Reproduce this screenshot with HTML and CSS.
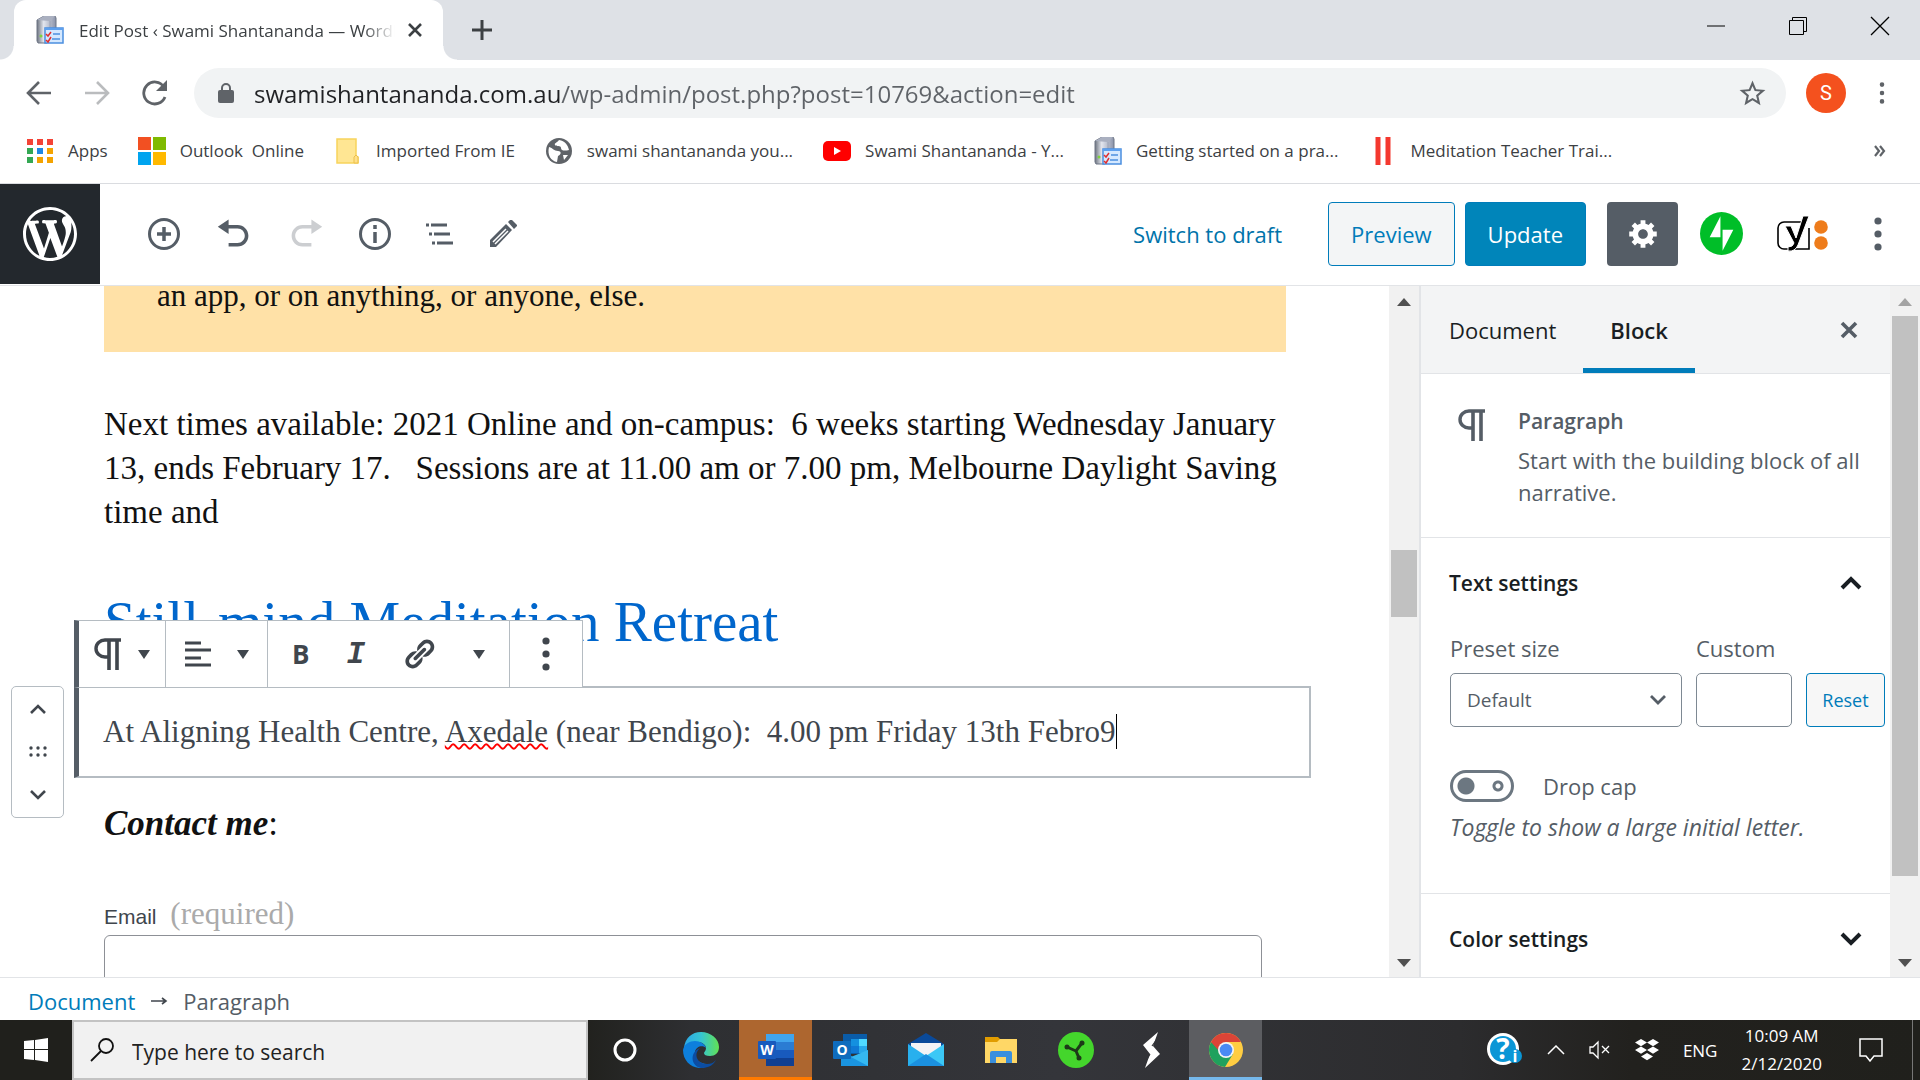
FILE: index.html
```html
<!DOCTYPE html>
<html lang="en">

<head>
    <meta charset="UTF-8">
    <meta name="viewport" content="width=device-width, initial-scale=1.0">
    <title>Edit Post ‹ Swami Shantananda — WordPress</title>
    <link rel="stylesheet" href="styles.css">
</head>

<body>
    <!-- shared icons -->
    <svg class="defs" aria-hidden="true">
        <defs>
            <linearGradient id="steel" x1="0" x2="1">
                <stop offset="0" stop-color="#6d7480" />
                <stop offset="0.35" stop-color="#e3e6ee" />
                <stop offset="1" stop-color="#8a92a8" />
            </linearGradient>
            <linearGradient id="edgeTop" x1="0" x2="1">
                <stop offset="0" stop-color="#2ba7e8" />
                <stop offset="0.5" stop-color="#36c5d0" />
                <stop offset="1" stop-color="#62e252" />
            </linearGradient>
        </defs>
        <symbol id="server" viewBox="0 0 28 28">
            <path d="M1 4L8 0h11l1 2v18l-9 7H2l-1-2z" fill="url(#steel)" stroke="#6c7484" />
            <path d="M1 4l7-4h11l-5 5z" fill="#aab0c0" />
            <path d="M14 5v20" stroke="#9aa2b4" />
            <circle cx="5" cy="20" r="1.5" fill="#7ed33c" />
            <path d="M9 12h18v15H9z" fill="#d4e8ff" stroke="#4b8fe0" stroke-width="1.5" />
            <path d="M9 12h18v2H9z" fill="#5ea0ee" />
            <path d="M17 18h7M16 23h8" stroke="#4b8fe0" stroke-width="1.5" />
            <path d="M10 18l2 2 3-4M10 24l2 2 3-5" fill="none" stroke="#e03030" stroke-width="1.5" />
        </symbol>
        <symbol id="pilcrow" viewBox="0 0 28 32">
            <path d="M27 2H11a9 8.5 0 0 0 0 17h4" fill="none" stroke="currentColor" stroke-width="3.4" />
            <path d="M15 2v30M23 2v30" stroke="currentColor" stroke-width="3.6" />
        </symbol>
        <symbol id="dots" viewBox="0 0 8 34">
            <circle cx="4" cy="4" r="3.6" />
            <circle cx="4" cy="17" r="3.6" />
            <circle cx="4" cy="30" r="3.6" />
        </symbol>
    </svg>

    <header class="browser">
        <div class="tab-strip">
            <div class="tab">
                <svg class="favicon"><use href="#server" /></svg>
                <span class="tab-title">Edit Post ‹ Swami Shantananda — WordPress</span>
                <button class="plain" aria-label="Close tab">
                    <svg width="16" height="16" viewBox="0 0 16 16"><path d="M2 2l12 12M14 2L2 14" stroke="#3c4043" stroke-width="2.6" /></svg>
                </button>
            </div>
            <button class="plain new-tab" aria-label="New tab">
                <svg width="22" height="22" viewBox="0 0 22 22"><path d="M11 1v20M1 11h20" stroke="#3c4043" stroke-width="3" /></svg>
            </button>
            <div class="window-buttons">
                <button class="plain" aria-label="Minimize"><svg width="20" height="20"><path d="M1 10h18" stroke="#000" /></svg></button>
                <button class="plain" aria-label="Restore"><svg width="20" height="20" fill="none" stroke="#000"><path d="M1.500 4.500h14v14h-14zM4.500 4.500v-3h14v14h-3" /></svg></button>
                <button class="plain" aria-label="Close"><svg width="20" height="20"><path d="M1 1l18 18M19 1L1 19" stroke="#000" stroke-width="1.300" /></svg></button>
            </div>
        </div>

        <div class="nav-bar">
            <button class="plain" aria-label="Back"><svg width="26" height="26" fill="none" stroke="#5f6368" stroke-width="2.600"><path d="M25 13H3M13 2L2 13l11 11" /></svg></button>
            <button class="plain" aria-label="Forward"><svg width="26" height="26" fill="none" stroke="#babcbe" stroke-width="2.600"><path d="M1 13h22M13 2l11 11-11 11" /></svg></button>
            <button class="plain" aria-label="Reload"><svg width="26" height="26"><path d="M22 7A11 11 0 1 0 23 17" fill="none" stroke="#5f6368" stroke-width="2.800" /><path d="M25 0v11H14z" fill="#5f6368" /></svg></button>
            <div class="omnibox">
                <svg width="16" height="20" viewBox="0 0 16 20"><rect x="0" y="7" width="16" height="13" rx="2" fill="#5f6368" /><path d="M4 8V5a4 4 0 0 1 8 0v3" fill="none" stroke="#5f6368" stroke-width="2" /></svg>
                <input class="url" type="text" aria-label="Address" value="swamishantananda.com.au/wp-admin/post.php?post=10769&amp;action=edit">
                <button class="plain" aria-label="Bookmark this page"><svg width="31" height="31" viewBox="0 0 24 24"><path fill="#5f6368" d="M22 9.240l-7.190-.620L12 2 9.190 8.630 2 9.240l5.460 4.730L5.820 21 12 17.270 18.180 21l-1.630-7.030L22 9.240zM12 15.400l-3.760 2.270 1-4.280-3.320-2.880 4.380-.380L12 6.100l1.710 4.040 4.380.380-3.320 2.880 1 4.280L12 15.400z" /></svg></button>
            </div>
            <button class="avatar">S</button>
            <button class="plain" aria-label="Menu"><svg width="8" height="22" fill="#5f6368" viewBox="0 0 8 34"><use href="#dots" /></svg></button>
        </div>

        <nav class="bookmarks">
            <a href="#">
                <svg viewBox="0 0 28 28">
                    <path d="M1 2h6v6H1zM11 2h6v6h-6zM21 2h6v6h-6z" fill="#f44336" />
                    <path d="M1 11h6v6H1zM1 20h6v6H1z" fill="#34a853" />
                    <path d="M11 11h6v6h-6z" fill="#1e88e5" />
                    <path d="M21 11h6v6h-6zM11 20h6v6h-6zM21 20h6v6h-6z" fill="#f4a300" />
                </svg>Apps</a>
            <a href="#">
                <svg viewBox="0 0 28 28">
                    <path d="M0 0h13v13H0z" fill="#f25022" />
                    <path d="M15 0h13v13H15z" fill="#7fba00" />
                    <path d="M0 15h13v13H0z" fill="#00a4ef" />
                    <path d="M15 15h13v13H15z" fill="#ffb900" />
                </svg>Outlook&nbsp; Online</a>
            <a href="#">
                <svg viewBox="0 0 28 28"><path d="M3 2h19v17l2 1v6H3z" fill="#ffe693" stroke="#f8d45c" stroke-width="1.500" /><path d="M20 26v-6l2-2 2 2v6z" fill="#ffe08a" stroke="#ecc04a" /></svg>Imported From IE</a>
            <a href="#">
                <svg viewBox="0 0 28 28"><circle cx="14" cy="14" r="13" fill="#5f6368" /><path d="M4 10c4 1 5 4 9 4s3 4 0 5l-1 6c-6-1-10-7-8-15zM14 3c-2 3-5 3-4 5s6 0 6 3 4 3 8 2c-1-5-4-9-10-10zM18 18l5 0-4 5z" fill="#fff" /></svg>swami shantananda you...</a>
            <a href="#">
                <svg viewBox="0 0 28 28"><rect y="4" width="28" height="20" rx="5" fill="#f00" /><path d="M11 10l7 4-7 4z" fill="#fff" /></svg>Swami Shantananda - Y...</a>
            <a href="#"><svg><use href="#server" /></svg>Getting started on a pra...</a>
            <a href="#"><svg viewBox="0 0 28 28"><path d="M10 0v28M20 0v28" stroke="#f4382f" stroke-width="5" /></svg>Meditation Teacher Trai...</a>
            <button class="plain more" aria-label="More bookmarks"><svg width="12" height="12" fill="none" stroke="#5f6368" stroke-width="2.200"><path d="M1 1l4 5-4 5M6 1l4 5-4 5" /></svg></button>
        </nav>
    </header>

    <div class="wp-header">
        <a class="wp-logo" href="#" aria-label="View Posts">
            <svg width="54" height="54" viewBox="0 0 20 20"><path fill="#fff" d="M20 10c0-5.510-4.490-10-10-10C4.480 0 0 4.490 0 10c0 5.520 4.480 10 10 10 5.510 0 10-4.480 10-10zM7.780 15.370L4.370 6.220c.55-.02 1.170-.08 1.170-.08.5-.06.44-1.130-.06-1.110 0 0-1.450.11-2.370.11-.18 0-.37 0-.58-.01C4.120 2.690 6.870 1.110 10 1.110c2.330 0 4.450.87 6.050 2.340-.68-.11-1.650.39-1.650 1.580 0 .74.45 1.360.9 2.100.35.61.55 1.360.55 2.460 0 1.490-1.400 5-1.400 5l-3.030-8.370c.54-.02.82-.17.82-.17.5-.05.44-1.250-.06-1.220 0 0-1.440.12-2.380.12-.87 0-2.330-.12-2.330-.12-.5-.03-.56 1.200-.06 1.220l.92.08 1.260 3.410zM17.410 10c.24-.64.74-1.870.43-4.250.7 1.290 1.050 2.710 1.050 4.250 0 3.290-1.730 6.240-4.400 7.780.97-2.590 1.940-5.200 2.920-7.780zM6.100 18.090C3.120 16.650 1.110 13.530 1.110 10c0-1.300.23-2.480.72-3.590C3.250 10.300 4.670 14.200 6.100 18.090zm4.030-6.630l2.580 6.980c-.86.29-1.760.45-2.710.45-.79 0-1.570-.11-2.290-.33.81-2.380 1.620-4.740 2.420-7.100z" /></svg>
        </a>
        <div class="wp-tools">
            <button class="plain" aria-label="Add block"><svg width="32" height="32" fill="none" stroke="currentColor" stroke-width="3"><circle cx="16" cy="16" r="14.500" /><path d="M16 9v14M9 16h14" stroke-width="3.500" /></svg></button>
            <button class="plain" aria-label="Undo"><svg width="38" height="36" viewBox="0 0 20 20"><path fill="currentColor" d="M12 5H7V2L1 6l6 4V7h5c2.200 0 4 1.800 4 4s-1.800 4-4 4H7v2h5c3.300 0 6-2.700 6-6s-2.700-6-6-6z" /></svg></button>
            <button class="plain" aria-label="Redo" disabled><svg width="36" height="36" viewBox="0 0 20 20"><path fill="#ccced1" d="M8 5h5V2l6 4-6 4V7H8c-2.200 0-4 1.800-4 4s1.800 4 4 4h5v2H8c-3.300 0-6-2.700-6-6s2.700-6 6-6z" /></svg></button>
            <button class="plain" aria-label="Content structure"><svg width="32" height="32" fill="none" stroke="currentColor" stroke-width="3"><circle cx="16" cy="16" r="14.500" /><path d="M16 14v11M16 7v4" stroke-width="3.500" /></svg></button>
            <button class="plain" aria-label="Block navigation"><svg width="28" height="28" stroke="currentColor" stroke-width="3"><path d="M0 5h3M5 5h16M3 14h3M8 14h16M6 23h3M11 23h16" /></svg></button>
            <button class="plain" aria-label="Modes"><svg width="28" height="28" viewBox="0 0 28 28"><path d="M1 27v-7L17 4l6 6L7 27z" fill="currentColor" /><path d="M19 2l2-2h2l5 5v1l-3 3z" fill="currentColor" /><path d="M4 22L17 9M6 24L19 11" stroke="#fff" stroke-width="1.500" /></svg></button>
        </div>
        <div class="wp-actions">
            <button class="plain draft">Switch to draft</button>
            <button class="button">Preview</button>
            <button class="button primary">Update</button>
            <button class="gear" aria-label="Settings"><svg width="34" height="34" viewBox="0 0 19 21"><path fill="#fff" fill-rule="evenodd" d="M18 12h-2.180c-.17.7-.44 1.350-.81 1.930l1.540 1.540-2.100 2.100-1.540-1.540c-.58.36-1.230.63-1.910.79V19H8v-2.180c-.68-.16-1.330-.43-1.910-.79l-1.540 1.540-2.120-2.120 1.540-1.540c-.36-.58-.63-1.230-.79-1.910H1V9.030h2.170c.16-.7.44-1.350.8-1.940L2.430 5.550l2.100-2.100 1.540 1.540c.58-.37 1.240-.64 1.930-.81V2h3v2.180c.68.16 1.330.43 1.910.79l1.540-1.540 2.120 2.120-1.540 1.540c.36.59.64 1.240.8 1.940H18V12zm-8.500 1.500c1.660 0 3-1.340 3-3s-1.340-3-3-3-3 1.340-3 3 1.340 3 3 3z" /></svg></button>
            <button class="plain jetpack" aria-label="Jetpack"><svg width="43" height="43" viewBox="0 0 32 32"><circle cx="16" cy="16" r="16" fill="#00be28" /><path d="M15.200 18.700H7.200l8-15.500zM16.800 28.800V13.300h8z" fill="#fff" /></svg></button>
            <button class="plain yoast" aria-label="Yoast SEO"><svg width="52" height="36" viewBox="0 0 52 36"><path d="M24 6H7a6 6 0 0 0-6 6v15a6 6 0 0 0 6 6h25V12" fill="#fff" stroke="#000" stroke-width="1.600" /><path d="M8 10h6l5 12 7-22h6L21 29q-3 7-10 6v-4q5 0 6-4z" fill="#000" stroke="#fff" stroke-width="1" /><circle cx="44" cy="11" r="6.800" fill="#ee7c1b" /><circle cx="44" cy="27" r="6.800" fill="#ee7c1b" /></svg></button>
            <button class="plain" aria-label="More tools"><svg width="8" height="34" fill="currentColor"><use href="#dots" /></svg></button>
        </div>
    </div>

    <main class="editor">
        <div class="writing">
            <p class="notice">an app, or on anything, or anyone, else.</p>
            <p class="para">Next times available: 2021 Online and on-campus:&nbsp; 6 weeks starting Wednesday January<br>13, ends February 17.&nbsp;&nbsp; Sessions are at 11.00 am or 7.00 pm, Melbourne Daylight Saving<br>time and</p>
            <h2>Still-mind Meditation Retreat</h2>

            <div class="block selected">
                <div class="mover">
                    <button class="plain" aria-label="Move up"><svg width="16" height="10" fill="none" stroke="currentColor" stroke-width="2.600"><path d="M1 9l7-7 7 7" /></svg></button>
                    <svg width="18" height="12" fill="currentColor"><circle cx="2" cy="2" r="1.700" /><circle cx="9" cy="2" r="1.700" /><circle cx="16" cy="2" r="1.700" /><circle cx="2" cy="9" r="1.700" /><circle cx="9" cy="9" r="1.700" /><circle cx="16" cy="9" r="1.700" /></svg>
                    <button class="plain" aria-label="Move down"><svg width="16" height="10" fill="none" stroke="currentColor" stroke-width="2.600"><path d="M1 1l7 7 7-7" /></svg></button>
                </div>
                <div class="block-toolbar">
                    <div class="group type">
                        <button class="plain" aria-label="Change block type"><svg width="28" height="32"><use href="#pilcrow" /></svg><i class="caret"></i></button>
                    </div>
                    <div class="group align">
                        <button class="plain" aria-label="Align"><svg width="26" height="26" stroke="currentColor" stroke-width="3"><path d="M0 2h16M0 9h26M0 17h16M0 24h26" /></svg><i class="caret"></i></button>
                    </div>
                    <div class="group format">
                        <button class="plain bold">B</button>
                        <button class="plain italic">I</button>
                        <button class="plain" aria-label="Link"><svg width="34" height="34" viewBox="0 0 20 20"><path fill="currentColor" d="M17.740 2.760c1.680 1.690 1.680 4.410 0 6.100l-1.530 1.520c-1.120 1.120-2.700 1.470-4.140 1.090l2.620-2.610.76-.77.76-.76c.84-.84.84-2.200 0-3.040-.84-.85-2.200-.85-3.040 0l-.77.76-3.380 3.380c-.37-1.440-.02-3.020 1.100-4.140l1.520-1.530c1.690-1.680 4.420-1.680 6.100 0zM8.590 13.430l5.340-5.340c.42-.42.42-1.100 0-1.520-.44-.43-1.130-.39-1.530 0l-5.330 5.340c-.42.42-.42 1.100 0 1.520.44.43 1.130.39 1.520 0zm-.76 2.290l4.140-4.150c.38 1.440.03 3.020-1.090 4.140l-1.520 1.530c-1.690 1.680-4.410 1.680-6.100 0-1.680-1.680-1.680-4.420 0-6.100l1.530-1.520c1.120-1.120 2.700-1.470 4.140-1.100l-4.140 4.150c-.85.84-.85 2.200 0 3.050.84.84 2.200.84 3.040 0z" /></svg></button>
                        <button class="plain" aria-label="More rich text controls"><i class="caret"></i></button>
                    </div>
                    <div class="group options">
                        <button class="plain" aria-label="More options"><svg width="8" height="34" fill="currentColor"><use href="#dots" /></svg></button>
                    </div>
                </div>
                <p contenteditable="true" spellcheck="false">At Aligning Health Centre, <span class="misspelt">Axedale</span> (near Bendigo):&nbsp; 4.00 pm Friday 13th Febro9<span class="cursor"></span></p>
            </div>

            <p class="contact"><strong><em>Contact me</em></strong>:</p>
            <label class="email-label" for="email">Email <span>(required)</span></label>
            <input class="email" id="email" type="email">
        </div>

        <div class="scrollbar">
            <i class="up"></i>
            <div class="thumb"></div>
            <i class="down"></i>
        </div>

        <aside class="sidebar">
            <div class="sidebar-tabs">
                <button class="side-tab">Document</button>
                <button class="side-tab active">Block</button>
                <button class="plain close" aria-label="Close settings"><svg width="18" height="18" stroke="#555d66" stroke-width="3.600"><path d="M2 2l14 14M16 2L2 16" /></svg></button>
            </div>
            <section class="card">
                <svg width="28" height="32"><use href="#pilcrow" /></svg>
                <div>
                    <h3>Paragraph</h3>
                    <p>Start with the building block of all narrative.</p>
                </div>
            </section>
            <section class="panel">
                <button class="panel-title">Text settings <svg width="22" height="14" fill="none" stroke="currentColor" stroke-width="4"><path d="M2 12l9-9 9 9" /></svg></button>
                <div class="size-row">
                    <div class="preset">
                        <label for="preset">Preset size</label>
                        <select id="preset">
                            <option>Default</option>
                        </select>
                        <svg width="16" height="10" fill="none" stroke="#555d66" stroke-width="2.800"><path d="M1 1l7 7 7-7" /></svg>
                    </div>
                    <div class="custom">
                        <label for="custom">Custom</label>
                        <input id="custom" type="text">
                    </div>
                    <button class="reset">Reset</button>
                </div>
                <div class="toggle-row">
                    <input id="dropcap" type="checkbox">
                    <label for="dropcap">Drop cap</label>
                </div>
                <p class="help">Toggle to show a large initial letter.</p>
            </section>
            <section class="panel">
                <button class="panel-title">Color settings <svg width="22" height="14" fill="none" stroke="currentColor" stroke-width="4"><path d="M2 2l9 9 9-9" /></svg></button>
            </section>
        </aside>

        <div class="scrollbar outer">
            <i class="up"></i>
            <div class="thumb"></div>
            <i class="down"></i>
        </div>
    </main>

    <footer class="breadcrumb">
        <a href="#">Document</a>
        <svg width="18" height="10" fill="none" stroke="#40464d" stroke-width="1.600"><path d="M1 5h14M12 2l4 3-4 3" /></svg>
        <span>Paragraph</span>
    </footer>

    <div class="taskbar">
        <button class="start" aria-label="Start"><svg width="24" height="24" fill="#fff"><path d="M0 3l10-1v9H0zM11 2l13-2v11H11zM0 12h10v10L0 21zM11 12h13v12l-13-2z" /></svg></button>
        <label class="search">
            <svg width="24" height="24" fill="none" stroke="#111" stroke-width="1.800"><circle cx="16" cy="8" r="7" /><path d="M11 13L1 23" /></svg>
            <input type="text" placeholder="Type here to search" aria-label="Search">
        </label>
        <button class="app" aria-label="Cortana"><svg width="36" height="36"><circle cx="17" cy="18" r="10" fill="none" stroke="#fff" stroke-width="3" /></svg></button>
        <button class="app" aria-label="Edge"><svg width="36" height="36" viewBox="0 0 36 36">
                <path d="M1 16C2 6 9 0 18 0c10 0 18 7 18 15 0 6-4 9-9 9-4 0-6-1-6-3 0-1 2-2 2-5 0-3-4-6-8-6C8 10 3 13 1 16z" fill="url(#edgeTop)" />
                <path d="M0 18C1 12 7 9 12 9c5 0 10 3 11 7-3-3-10-2-11 4-1 7 5 12 12 12-2 2-5 4-8 4C7 35 0 28 0 18z" fill="#0d7fdc" />
                <path d="M17 16c-7 6-3 16 7 16 4 0 6-1 9-4-3 6-9 8-14 8-10 0-14-15-2-20z" fill="#0c4da2" />
            </svg></button>
        <button class="app word" aria-label="Word"><svg width="36" height="36" viewBox="0 0 36 36">
                <path d="M8 2h28v9H8z" fill="#41a5ee" /><path d="M8 10h28v8H8z" fill="#2b7cd3" /><path d="M8 18h28v8H8z" fill="#185abd" /><path d="M8 26h28v8H8z" fill="#103f91" />
                <rect y="9" width="18" height="18" rx="1" fill="#185abd" /><text x="9" y="23" text-anchor="middle">W</text>
            </svg></button>
        <button class="app" aria-label="Outlook"><svg width="36" height="36" viewBox="0 0 36 36">
                <path d="M10 2h24v20H10z" fill="#0a5ca8" /><path d="M18 7h8v7h-8z" fill="#1490df" /><path d="M26 7h8v7h-8z" fill="#50d9ff" /><path d="M18 14h8v7h-8z" fill="#0f78d4" /><path d="M26 14h8v7h-8z" fill="#28a8ea" />
                <path d="M8 18l14 8 13-8v16H8z" fill="#1a94e0" /><path d="M35 18v16L18 25z" fill="#35b8f1" />
                <rect y="9" width="18" height="18" rx="1" fill="#0f6cbd" /><text x="9" y="23" text-anchor="middle">O</text>
            </svg></button>
        <button class="app" aria-label="Mail"><svg width="36" height="36" viewBox="0 0 36 36"><path d="M0 12L18 1l18 11v6H0z" fill="#0a4a9a" /><path d="M3 11h30v10L18 24 3 20z" fill="#f3f3f5" /><path d="M0 12l18 12v10H0z" fill="#28b0ee" /><path d="M36 12v22H18V24z" fill="#3cc8f6" /><path d="M0 34l18-12 18 12z" fill="#1b91e0" /></svg></button>
        <button class="app" aria-label="File Explorer"><svg width="36" height="36" viewBox="0 0 36 36"><path d="M2 5h13l3 3-3 3H2z" fill="#e19c00" /><path d="M2 10h12l3-3h17v24H2z" fill="#ffd766" /><path d="M7 31V21q0-2 2-2h18q2 0 2 2v10h-6v-6H13v6z" fill="#3a8fdd" /></svg></button>
        <button class="app" aria-label="Razer"><svg width="36" height="36" viewBox="0 0 36 36"><circle cx="18" cy="18" r="18" fill="#44d62c" /><path d="M9 15l9 4 6-8M18 19l3 7" fill="none" stroke="#1d3a18" stroke-width="3" /><g fill="#1d3a18"><circle cx="9" cy="15" r="2.500" /><circle cx="24" cy="11" r="2.500" /><circle cx="21" cy="26" r="2.500" /></g></svg></button>
        <button class="app" aria-label="Streamlabs"><svg width="36" height="36" viewBox="0 0 36 36"><path d="M25 0L10 13l7 9-5 14 15-14-7-8z" fill="#fff" /><path d="M24 7l-5 7M13 29l4-7" fill="none" stroke="#333438" stroke-width="1.200" /></svg></button>
        <button class="app chrome" aria-label="Chrome"><svg width="34" height="34" viewBox="0 0 34 34"><circle cx="17" cy="17" r="17" fill="#ffcd42" /><path d="M17 17L2 9a17 17 0 0 0 14 25l8-13z" fill="#1fa15d" /><path d="M2 9a17 17 0 0 1 30 0H17l-7 9z" fill="#db4437" /><circle cx="17" cy="17" r="8" fill="#f4f4f4" /><circle cx="17" cy="17" r="6.300" fill="#4a8af4" /></svg></button>
        <div class="tray">
            <svg width="36" height="34" viewBox="0 0 36 34"><circle cx="16" cy="16" r="16" fill="#fff" /><circle cx="16" cy="16" r="13" fill="#0a96d6" /><text class="q" x="16" y="26" text-anchor="middle">?</text><circle cx="28" cy="23" r="7" fill="#0a96d6" /><text class="i" x="28" y="29" text-anchor="middle">i</text></svg>
            <svg width="18" height="10" fill="none" stroke="#fff" stroke-width="1.500"><path d="M1 9l8-8 8 8" /></svg>
            <svg width="22" height="20" fill="none" stroke="#fff" stroke-width="1.300"><path d="M1 7h3l5-5v16l-5-5H1zM13 6l7 7M20 6l-7 7" /></svg>
            <svg width="24" height="22" fill="#fff"><path d="M6 0l6 3.600-6 3.700L0 3.600zM18 0l6 3.600-6 3.700-6-3.700zM6 7.400l6 3.700-6 3.600-6-3.600zM18 7.400l6 3.700-6 3.600-6-3.600zM12 14l6 3.500-6 3.700-6-3.700z" /></svg>
            <span>ENG</span>
            <div class="clock">10:09 AM<br>2/12/2020</div>
            <svg class="note" width="24" height="24" fill="none" stroke="#fff" stroke-width="1.500"><path d="M1 1h22v17h-8l-4 5-4-5H1z" /></svg>
        </div>
    </div>
</body>

</html>
```

FILE: styles.css
```css
* {
    box-sizing: border-box;
}

body {
    margin: 0;
    height: 100vh;
    display: flex;
    flex-direction: column;
    overflow: hidden;
    background-color: #fff;
    font-family: "Open Sans", "Noto Sans", sans-serif;
    color: #555d66;
}

p, h2, h3 {
    margin: 0;
    font-weight: normal;
}

a {
    text-decoration: none;
}

button, input, select {
    font-family: inherit;
    color: inherit;
    cursor: pointer;
}

.plain {
    display: flex;
    align-items: center;
    padding: 0;
    border: none;
    background: none;
}

.defs {
    position: absolute;
    width: 0;
    height: 0;
}

/* browser */
.tab-strip {
    display: flex;
    align-items: center;
    height: 60px;
    padding-left: 14px;
    background:
        radial-gradient(circle at 0 0, #dee1e6 13px, #fff 14px) 0 46px / 14px 14px no-repeat,
        radial-gradient(circle at 14px 0, #dee1e6 13px, #fff 14px) 443px 46px / 14px 14px no-repeat,
        #dee1e6;
}

.tab {
    display: flex;
    align-items: center;
    width: 429px;
    height: 60px;
    padding: 0 20px 0 21px;
    border-radius: 12px 12px 0 0;
    background-color: #fff;
}

.favicon {
    flex: none;
    width: 30px;
    height: 28px;
}

.tab-title {
    flex: 1;
    margin: 0 12px 0 14px;
    overflow: hidden;
    white-space: nowrap;
    font-size: 17px;
    color: #3c4043;
    -webkit-mask-image: linear-gradient(to right, #000 90%, transparent);
    mask-image: linear-gradient(to right, #000 90%, transparent);
}

.new-tab {
    margin-left: 28px;
}

.window-buttons {
    display: flex;
    gap: 62px;
    margin-left: auto;
    padding: 0 30px 8px 0;
}

.nav-bar {
    display: flex;
    align-items: center;
    gap: 32px;
    height: 66px;
    padding: 0 34px 0 26px;
}

.omnibox {
    flex: 1;
    display: flex;
    align-items: center;
    height: 50px;
    margin: 0 -12px 0 -6px;
    padding: 0 18px 0 24px;
    border-radius: 25px;
    background-color: #f1f3f4;
}

.url {
    flex: 1;
    margin-left: 20px;
    padding: 0;
    border: none;
    outline: none;
    font-size: 24px;
    color: transparent;
    background: linear-gradient(to right, #202124 306px, #5f6368 306px);
    -webkit-background-clip: text;
    background-clip: text;
}

.avatar {
    width: 40px;
    height: 40px;
    padding: 0;
    border: none;
    border-radius: 50%;
    background-color: #f4511e;
    font-family: Roboto, sans-serif;
    font-size: 20px;
    color: #fff;
}

.bookmarks {
    display: flex;
    align-items: center;
    gap: 30px;
    height: 58px;
    padding: 0 34px 8px 26px;
    border-bottom: 1px solid #dadce0;
}

.bookmarks a {
    display: flex;
    align-items: center;
    gap: 14px;
    white-space: nowrap;
    font-size: 17px;
    color: #3c4043;
}

.bookmarks a svg {
    width: 28px;
    height: 28px;
}

.more {
    margin-left: auto;
}

/* editor header */
.wp-header {
    display: flex;
    align-items: center;
    height: 102px;
    padding-bottom: 2px;
    border-bottom: 1px solid #e2e4e7;
}

.wp-logo {
    display: flex;
    align-items: center;
    justify-content: center;
    width: 100px;
    height: 100px;
    background-color: #23282d;
}

.wp-tools {
    display: flex;
    align-items: center;
    gap: 35px;
    margin-left: 48px;
}

.wp-actions {
    display: flex;
    align-items: center;
    margin-left: auto;
    padding-right: 38px;
}

.draft {
    margin-right: 46px;
    font-size: 22px;
    color: #0073aa;
}

.button {
    height: 64px;
    margin-right: 10px;
    padding: 0 22px;
    border: 1px solid #007cba;
    border-radius: 4px;
    background-color: #f3f5f6;
    font-size: 22px;
    color: #007cba;
}

.primary {
    background-color: #0085ba;
    color: #fff;
}

.gear {
    display: flex;
    align-items: center;
    justify-content: center;
    width: 71px;
    height: 64px;
    margin-left: 11px;
    padding: 0;
    border: none;
    border-radius: 4px;
    background-color: #555d66;
}

.jetpack {
    margin-left: 22px;
}

.yoast {
    margin: 0 45px 0 34px;
}

/* editor */
.editor {
    flex: 1;
    display: flex;
    min-height: 0;
}

.writing {
    flex: 1;
    min-width: 0;
    overflow: hidden;
    padding: 0 103px 0 104px;
    font-family: "Liberation Serif", serif;
    font-size: 33px;
    line-height: 44px;
    color: #111;
}

.notice {
    margin-top: -12px;
    padding: 0 53px 34px;
    background-color: #ffe1a7;
    font-size: 31px;
}

.para {
    margin-top: 50px;
    white-space: nowrap;
}

.writing h2 {
    margin-top: 56px;
    font-size: 57px;
    line-height: 64px;
    color: #0066cc;
}

.block {
    position: relative;
    margin: 32px -25px 0 -30px;
    padding: 22px 24px;
    border: 2px solid #b5bcc2;
    border-left: 5px solid #555d66;
    color: #40464d;
}

.block p {
    outline: none;
    font-size: 31px;
    white-space: nowrap;
}

.misspelt {
    text-decoration: underline wavy #f00 2px;
}

.cursor {
    border-left: 1px solid #000;
}

.mover {
    position: absolute;
    top: -2px;
    left: -68px;
    width: 53px;
    height: 132px;
    display: flex;
    flex-direction: column;
    align-items: center;
    justify-content: space-between;
    padding: 17px 0;
    border: 1px solid #b5bcc2;
    border-radius: 5px;
}

.block-toolbar {
    position: absolute;
    left: -5px;
    bottom: 88px;
    display: flex;
    height: 68px;
    border: 1px solid #b5bcc2;
    border-left: 5px solid #555d66;
    background-color: #fff;
}

.group {
    display: flex;
    align-items: center;
    justify-content: center;
    border-right: 1px solid #b5bcc2;
}

.type {
    width: 87px;
}

.type .plain {
    gap: 16px;
}

.align {
    width: 102px;
}

.align .plain {
    gap: 26px;
}

.format {
    width: 242px;
    gap: 37px;
}

.options {
    width: 72px;
    border: none;
}

.caret {
    border: 6px solid transparent;
    border-top: 9px solid #40464d;
    border-bottom: none;
}

.bold {
    font-family: "Open Sans", sans-serif;
    font-size: 26px;
    font-weight: bold;
}

.italic {
    font-family: "Liberation Mono", monospace;
    font-size: 31px;
    font-style: italic;
    font-weight: bold;
}

.contact {
    margin-top: 24px;
    font-size: 35px;
}

.email-label {
    display: block;
    height: 40px;
    margin-top: 46px;
    font-family: "Liberation Sans", sans-serif;
    font-size: 21px;
    color: #40464d;
}

.email-label span {
    margin-left: 8px;
    font-family: "Liberation Serif", serif;
    font-size: 31px;
    color: #aaa;
}

.email {
    display: block;
    width: 98%;
    height: 60px;
    margin-top: 3px;
    border: 1px solid #8d9096;
    border-radius: 6px;
}

.scrollbar {
    display: flex;
    flex-direction: column;
    align-items: center;
    width: 30px;
    padding: 12px 0 10px;
    background-color: #f1f1f1;
}

.scrollbar .thumb {
    width: 26px;
    height: 67px;
    margin-top: 244px;
    background-color: #c1c1c1;
}

.up, .down {
    border: 7px solid transparent;
}

.up {
    border-top: none;
    border-bottom: 8px solid #505050;
}

.down {
    margin-top: auto;
    border-bottom: none;
    border-top: 8px solid #505050;
}

.outer .thumb {
    height: 560px;
    margin-top: 10px;
}

.outer .up {
    border-bottom-color: #a3a3a3;
}

/* sidebar */
.sidebar {
    width: 471px;
    overflow: hidden;
    border-left: 2px solid #e2e4e7;
    font-size: 22px;
}

.sidebar-tabs {
    display: flex;
    height: 88px;
    border-bottom: 1px solid #e2e4e7;
    background-color: #f3f4f5;
}

.side-tab {
    padding: 5px 27px 0;
    border: none;
    border-bottom: 5px solid transparent;
    background: none;
    font-size: 22px;
    color: #191e23;
}

.side-tab:first-child {
    padding-left: 28px;
}

.active {
    border-bottom-color: #007cba;
    font-weight: 600;
}

.close {
    margin: 0 32px 0 auto;
}

.card {
    display: flex;
    gap: 32px;
    height: 164px;
    padding: 31px 20px 0 37px;
    border-bottom: 1px solid #e2e4e7;
}

.card svg {
    flex: none;
    margin-top: 4px;
}

.card h3 {
    margin-bottom: 7px;
    font-size: 21px;
    font-weight: 600;
    line-height: 32px;
}

.card p {
    line-height: 32px;
}

.panel {
    border-bottom: 1px solid #e2e4e7;
}

.panel-title {
    display: flex;
    align-items: center;
    justify-content: space-between;
    width: 100%;
    height: 90px;
    padding: 0 28px;
    border: none;
    background: none;
    font-size: 21px;
    font-weight: 600;
    color: #191e23;
}

.size-row {
    display: flex;
    align-items: flex-end;
    gap: 14px;
    padding: 0 5px 0 29px;
}

.size-row label {
    display: block;
    margin-bottom: 5px;
    line-height: 40px;
}

.preset {
    position: relative;
    width: 232px;
}

.preset select, .custom input {
    display: block;
    width: 100%;
    height: 54px;
    padding: 0 16px;
    border: 1px solid #7e8993;
    border-radius: 5px;
    background-color: #fff;
    font-size: 19px;
    appearance: none;
}

.preset svg {
    position: absolute;
    right: 16px;
    bottom: 22px;
}

.custom {
    width: 96px;
}

.reset {
    width: 79px;
    height: 54px;
    padding: 0;
    border: 1px solid #007cba;
    border-radius: 4px;
    background-color: #f7f7f7;
    font-size: 18px;
    color: #007cba;
}

.toggle-row {
    display: flex;
    align-items: center;
    gap: 29px;
    height: 32px;
    margin-top: 43px;
    padding-left: 29px;
}

.toggle-row input {
    appearance: none;
    width: 64px;
    height: 32px;
    margin: 0;
    border: 3px solid #6c7781;
    border-radius: 16px;
    background:
        radial-gradient(circle at 13px 13px, #6c7781 8px, transparent 9px),
        radial-gradient(circle at 45px 13px, #fff 2px, #6c7781 3px, #6c7781 5px, transparent 6px);
}

.help {
    margin: 9px 0 50px 29px;
    font-size: 23px;
    line-height: 32px;
    font-style: italic;
    white-space: nowrap;
}

/* footer */
.breadcrumb {
    display: flex;
    align-items: center;
    gap: 15px;
    height: 43px;
    padding: 4px 28px 0;
    border-top: 1px solid #e2e4e7;
    font-size: 22px;
}

.breadcrumb a {
    color: #007cba;
}

/* taskbar */
.taskbar {
    display: flex;
    height: 60px;
    background: linear-gradient(to right, #20201c 30%, #2e2f32 36%, #34353a 55%, #2c2c2e 76%, #22211e 85%, #20201c);
    color: #fff;
}

.start {
    display: flex;
    align-items: center;
    justify-content: center;
    width: 72px;
    border: none;
    background: none;
}

.search {
    display: flex;
    align-items: center;
    gap: 18px;
    width: 516px;
    padding-left: 16px;
    border: 2px solid #c3c3c3;
    background-color: #f1f1f1;
}

.search input {
    flex: 1;
    border: none;
    padding: 4px 0 0;
    outline: none;
    background: none;
    font-size: 21px;
}

.search input::placeholder {
    color: #222;
}

.app {
    display: flex;
    align-items: center;
    justify-content: center;
    width: 73px;
    margin: 0 1px;
    padding: 0;
    border: none;
    background: none;
}

.word {
    border-bottom: 3px solid #ff7a00;
    border-top: 3px solid #ad662f;
    background-color: #ad662f;
}

.chrome {
    border-bottom: 3px solid #76b9ed;
    border-top: 3px solid #5c5d61;
    background-color: #5c5d61;
}

.app text {
    fill: #fff;
    font-size: 14px;
    font-weight: bold;
}

.tray {
    display: flex;
    align-items: center;
    gap: 24px;
    margin-left: auto;
    padding-right: 29px;
    border-right: 1px solid #777;
    margin-right: 7px;
    font-size: 17px;
}

.tray .q {
    fill: #fff;
    font-size: 28px;
    font-weight: bold;
}

.tray .i {
    fill: #fff;
    font-size: 16px;
    font-weight: bold;
}

.clock {
    line-height: 28px;
    text-align: center;
}

.note {
    margin-left: 13px;
}
```
